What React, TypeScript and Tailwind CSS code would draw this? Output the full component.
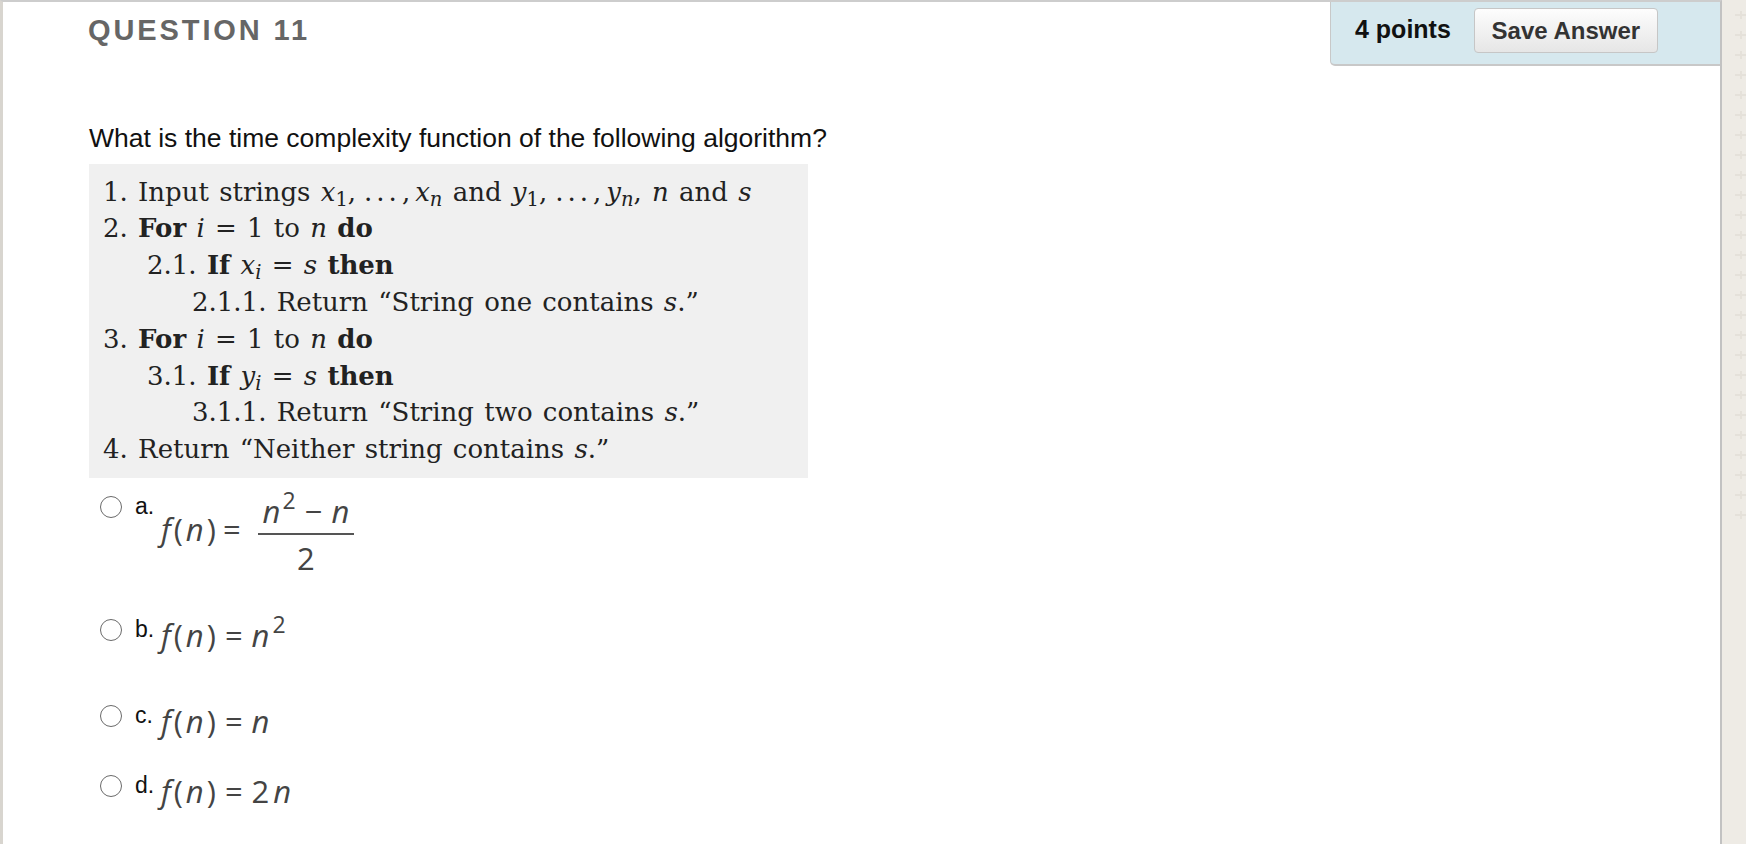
import React from "react";

const ALG = "font-['DejaVu_Serif',serif] text-[26px] leading-[36.8px] text-[#222] [word-spacing:2px]";
const MATH = "font-['Open_Sans',sans-serif] text-[31px] leading-none text-[#444]";

function M({ children }: { children: React.ReactNode }) {
  return <i className="italic">{children}</i>;
}

function Dots() {
  return (
    <>
      ,<span className="ml-[8px] mr-[1px] tracking-[4px]">...</span>,<span className="ml-[5px]" />
    </>
  );
}

function Radio() {
  return <span className="block h-[22px] w-[22px] shrink-0 rounded-full border-[1.8px] border-[#6a6a6a] bg-white" />;
}

function Fn({ gap = "mx-[7px]" }: { gap?: string }) {
  return (
    <>
      <i>f</i>
      <span className="ml-[3px]">(</span>
      <i className="mx-[3px]">n</i>
      <span>)</span>
      <span className={gap}>=</span>
    </>
  );
}

function Sup({ children, ml = "ml-[2px]" }: { children: React.ReactNode; ml?: string }) {
  return <span className={`relative bottom-[14px] text-[23px] ${ml}`}>{children}</span>;
}

function Option({
  label,
  height,
  children,
}: {
  label: string;
  height: string;
  children: React.ReactNode;
}) {
  return (
    <div className={`flex items-start ${height}`}>
      <Radio />
      <span className="ml-[13px] w-[26px] -mt-[1px] font-['Liberation_Sans',Arial,sans-serif] text-[23px] leading-none text-[#111]">
        {label}
      </span>
      {children}
    </div>
  );
}

function Crosses() {
  const ys = Array.from({ length: 26 }, (_, i) => 15 + i * 20);
  return (
    <svg width="24" height="844" className="block">
      {ys.map((y) => (
        <g key={y} stroke="#e5e1da" strokeWidth="2">
          <line x1="13" y1={y} x2="24" y2={y} />
          <line x1="19" y1={y - 4} x2="19" y2={y + 4} />
        </g>
      ))}
    </svg>
  );
}

export default function App() {
  return (
    <div className="flex h-[844px] w-[1746px] overflow-hidden bg-[#eeebe5] font-['Liberation_Sans',Arial,sans-serif]">
      <div className="flex h-full w-[1722px] flex-col border-l-[3px] border-r-2 border-t-2 border-l-[#d8d5cf] border-r-[#c2c2c2] border-t-[#cdcdcd] bg-white">
        <div className="flex items-start justify-between">
          <h2 className="pl-[85px] pt-[14px] text-[29px] font-bold leading-none tracking-[2.9px] text-[#666]">
            QUESTION 11
          </h2>
          <div className="flex h-[64px] w-[390px] items-start rounded-bl-[5px] border-b-2 border-l border-[#c8c8c8] bg-[#d6e8ee] pl-[24px]">
            <span className="mt-[14.5px] text-[25px] font-bold leading-none text-[#111]">4 points</span>
            <button className="ml-[23px] mt-[6px] flex h-[45px] w-[184px] items-center justify-center rounded-[4px] border-[1.5px] border-[#c6c6c6] bg-gradient-to-b from-[#fdfdfd] to-[#e6e6e6] text-[24px] font-bold text-[#333]">
              Save Answer
            </button>
          </div>
        </div>

        <div className="pl-[86px]">
          <p className="mt-[58.6px] text-[26.5px] leading-none text-[#111]">
            What is the time complexity function of the following algorithm?
          </p>

          <div className={`mt-[13px] w-[719px] bg-[#f0f0f0] pb-[10px] pl-[14px] pt-[9.6px] ${ALG}`}>
            <div>
              1. Input strings <M>x</M>
              <sub>1</sub>
              <Dots />
              <M>x</M>
              <sub>
                <M>n</M>
              </sub>{" "}
              and <M>y</M>
              <sub>1</sub>
              <Dots />
              <M>y</M>
              <sub>
                <M>n</M>
              </sub>
              , <M>n</M> and <M>s</M>
            </div>
            <div>
              2. <b>For</b> <M>i</M> = 1 to <M>n</M> <b>do</b>
            </div>
            <div className="pl-[44px]">
              2.1. <b>If</b> <M>x</M>
              <sub>
                <M>i</M>
              </sub>{" "}
              = <M>s</M> <b>then</b>
            </div>
            <div className="pl-[89px]">
              2.1.1. Return “String one contains <M>s</M>.”
            </div>
            <div>
              3. <b>For</b> <M>i</M> = 1 to <M>n</M> <b>do</b>
            </div>
            <div className="pl-[44px]">
              3.1. <b>If</b> <M>y</M>
              <sub>
                <M>i</M>
              </sub>{" "}
              = <M>s</M> <b>then</b>
            </div>
            <div className="pl-[89px]">
              3.1.1. Return “String two contains <M>s</M>.”
            </div>
            <div>
              4. Return “Neither string contains <M>s</M>.”
            </div>
          </div>

          <div className="mt-[18px] flex flex-col pl-[11px]">
            <Option label="a." height="h-[122.5px]">
              <div className={`-mt-[10.7px] flex items-center ${MATH}`}>
                <span className="flex">
                  <Fn />
                </span>
                <span className="ml-[10px] flex flex-col items-center">
                  <span className="px-[5px] pt-[10.5px]">
                    <i>n</i>
                    <Sup>2</Sup>
                    <span className="mx-[9px]">−</span>
                    <i>n</i>
                  </span>
                  <span className="mt-[6.5px] block h-[2px] w-full bg-[#555]" />
                  <span className="mt-[7.4px]">2</span>
                </span>
              </div>
            </Option>
            <Option label="b." height="h-[86px]">
              <div className={`mt-[1px] ${MATH}`}>
                <Fn gap="mx-[9px]" />
                <i>n</i>
                <Sup ml="ml-[3px]">2</Sup>
              </div>
            </Option>
            <Option label="c." height="h-[70px]">
              <div className={`mt-[1px] ${MATH}`}>
                <Fn gap="mx-[9px]" />
                <i>n</i>
              </div>
            </Option>
            <Option label="d." height="h-[60px]">
              <div className={`mt-[1px] ${MATH}`}>
                <Fn gap="mx-[9px]" />
                2<i className="ml-[4px]">n</i>
              </div>
            </Option>
          </div>
        </div>
      </div>
      <Crosses />
    </div>
  );
}
